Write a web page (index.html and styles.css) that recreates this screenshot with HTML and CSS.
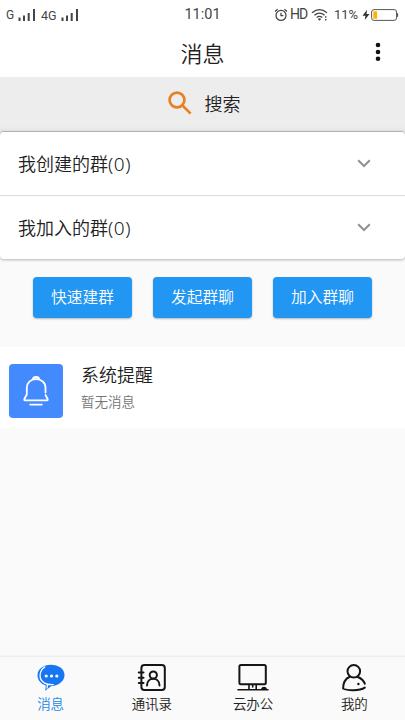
FILE: index.html
```
<!DOCTYPE html>
<html lang="zh-CN">
<head>
<meta charset="utf-8">
<meta name="viewport" content="width=device-width, initial-scale=1">
<title>消息</title>
<link rel="stylesheet" href="styles.css">
</head>
<body>
<div class="status">
  <div class="status-left">
    <span class="net net-g">G</span>
    <svg class="bars" width="19" height="14" viewBox="0 0 19 14"><path d="M2.5 9.5V13M7 7.5V13M11.7 5V13M17 1V13"/></svg>
    <span class="net net-4g">4G</span>
    <svg class="bars" width="19" height="14" viewBox="0 0 19 14"><path d="M2.5 9.5V13M7 7.5V13M11.7 5V13M17 1V13"/></svg>
  </div>
  <span class="time">11:01</span>
  <div class="status-right">
    <svg class="alarm" width="14" height="14" viewBox="0 0 14 14"><circle cx="7" cy="7.4" r="5"/><path d="M1 3.4 3.6 1.2M10.4 1.2 13 3.4M7 4.7V7.7H9.4"/></svg>
    <span class="hd">HD</span>
    <svg class="wifi" width="18" height="14" viewBox="0 0 18 14"><path d="M1 4.8Q8.5-1.6 16 4.8M3.4 7.2Q8.5 3 13.6 7.2M5.7 9.5Q8.5 7.3 11.3 9.5"/><path class="fill" d="M6.8 10.9Q8.5 9.8 10.2 10.9L8.5 12.8ZM14 8.2h1.4v1.6H14ZM14 11h1.4v1.6H14Z"/></svg>
    <span class="pct">11%</span>
    <svg class="bolt" width="8" height="12" viewBox="0 0 8 12"><path d="M5 .8.5 6.7H3.4L2.8 11 7.5 5H4.5Z"/></svg>
    <svg class="battery" width="28" height="12" viewBox="0 0 28 12"><rect class="case" x=".6" y=".6" width="25" height="10.8" rx="2.5"/><rect class="charge" x="2.3" y="2.3" width="3.8" height="7.4" rx=".5"/><path class="tip" d="M26.4 4.2V7.8"/></svg>
  </div>
</div>
<header class="header">
  <h1>消息</h1>
  <svg class="more" width="6" height="20" viewBox="0 0 6 20"><circle cx="3" cy="3" r="2.3"/><circle cx="3" cy="10" r="2.3"/><circle cx="3" cy="16.8" r="2.3"/></svg>
</header>
<div class="search">
  <svg width="24" height="24" viewBox="0 0 24 24"><circle cx="9" cy="9" r="7.4"/><path d="M14 14 22.6 22.6"/></svg>
  <span>搜索</span>
</div>
<section class="groups">
  <div class="group"><span>我创建的群<span class="count">(0)</span></span><svg width="14" height="9" viewBox="0 0 14 9"><path d="M1.2 1.2 7 7 12.8 1.2"/></svg></div>
  <div class="group"><span>我加入的群<span class="count">(0)</span></span><svg width="14" height="9" viewBox="0 0 14 9"><path d="M1.2 1.2 7 7 12.8 1.2"/></svg></div>
</section>
<div class="actions">
  <button>快速建群</button>
  <button>发起群聊</button>
  <button>加入群聊</button>
</div>
<main class="message">
  <div class="avatar">
    <svg width="28" height="32" viewBox="0 0 28 32"><path d="M11 4.2Q11 2 14 2T17 4.2M23.5 17.5V13C23.5 7.5 19.5 4.2 14 4.2S4.8 7.5 4.8 13V19.5L2.4 24Q1.8 25.4 3.2 25.4H24.8Q26.2 25.4 25.6 24L23.5 20M8.2 29.6H19.8"/></svg>
  </div>
  <div class="message-text"><h2>系统提醒</h2><p>暂无消息</p></div>
</main>
<nav class="tabs">
  <a class="tab active">
    <svg width="30" height="30" viewBox="0 0 30 30"><path class="fill" d="M14.8 1.8C22.5 1.8 28.5 6 28.5 12S23 22.5 15.5 23L9.2 27.8 9.8 22.6C4.8 21 1.5 17 1.5 12.3 1.5 6.3 7.3 1.8 14.8 1.8Z"/><path class="gap" d="M8.8 3.9C3.2 7.6 1.9 16.4 8.6 20.1 11.4 21.6 14 21.8 17.3 21.6M11 25.2 11.5 21.6"/><g class="dots"><circle cx="10.2" cy="13" r="1.6"/><circle cx="15.5" cy="13" r="1.6"/><circle cx="20.8" cy="13" r="1.6"/></g></svg>
    <span>消息</span>
  </a>
  <a class="tab">
    <svg width="30" height="30" viewBox="0 0 30 30"><rect class="line" x="4.4" y="2" width="23.4" height="25" rx="3"/><path class="line" d="M1.8 9.5H6.5M1.8 14.7H6.5M1.8 20H6.5M10 22.5C10 13.5 22.5 13.5 22.5 22.5"/><circle class="line" cx="16.3" cy="12" r="3.6"/></svg>
    <span>通讯录</span>
  </a>
  <a class="tab">
    <svg width="32" height="30" viewBox="0 0 32 30"><rect class="line" x="2.4" y="2" width="26.4" height="19.2" rx="1.5"/><path class="line thin" d="M1 26.8H31M12 21.5V26M15.7 22V24M19.2 21.5V26"/><path class="fill" d="M23.8 26.8Q24.5 23.7 27 23.7T30.2 26.8Z"/></svg>
    <span>云办公</span>
  </a>
  <a class="tab">
    <svg width="30" height="30" viewBox="0 0 30 30"><circle class="line" cx="14.8" cy="8.3" r="6.3"/><path class="line" d="M10.4 14C5.8 16 4.2 20 4.1 25.5 8 27.7 20.5 28 25.8 24.6M18.8 14C22.5 15.5 24.7 17.6 25.8 20.7"/><circle class="fill" cx="19.4" cy="21" r="1.2"/></svg>
    <span>我的</span>
  </a>
</nav>
</body>
</html>
```
FILE: styles.css
```
* { box-sizing: border-box; }
body {
  margin: 0;
  height: 100vh;
  display: flex;
  flex-direction: column;
  overflow: hidden;
  background: #fafafa;
  color: #212121;
  font-family: "Noto Sans CJK SC", sans-serif;
  font-weight: 350;
}
svg { display: block; flex: none; fill: none; }
h1, h2, p { margin: 0; font-weight: 350; }

.status {
  height: 28px;
  flex: none;
  display: grid;
  grid-template-columns: 1fr auto 1fr;
  align-items: center;
  padding: 0 6px 1px;
  background: #fff;
  color: #444;
  font-family: Roboto, sans-serif;
  font-weight: 400;
  line-height: 27px;
}
.status-left, .status-right { display: flex; align-items: center; }
.status-right { justify-content: flex-end; }
.net { font-size: 12px; padding-top: 2px; }
.net-g { width: 11px; }
.net-4g { width: 19px; margin-left: 5px; font-size: 12.5px; }
.bars { stroke: #444; stroke-width: 2; }
.time { font-size: 14.5px; }
.alarm, .wifi { stroke: #444; stroke-width: 1.25; }
.hd { margin-left: 2px; width: 19px; font-size: 14px; letter-spacing: -.9px; }
.wifi { margin-left: 2px; }
.wifi .fill { fill: #444; stroke: none; }
.pct { margin-left: 5px; width: 25px; font-size: 13px; }
.bolt { margin-left: 3px; fill: #333; }
.battery { margin-left: 1px; }
.case { stroke: #555; stroke-width: 1; }
.charge { fill: #ffb300; }
.tip { stroke: #555; stroke-width: 1.4; }

.header {
  height: 49px;
  flex: none;
  display: grid;
  grid-template-columns: 1fr auto 1fr;
  align-items: center;
  padding: 0 24px 2px;
  background: #fff;
}
.header h1 { grid-column: 2; font-size: 22px; line-height: 46px; }
.more { justify-self: end; fill: #111; }

.search {
  height: 55px;
  flex: none;
  display: flex;
  justify-content: center;
  align-items: center;
  gap: 13px;
  padding: 0 0 3px 3px;
  background: linear-gradient(#ededed 49px, #e4e4e4);
  font-size: 18px;
}
.search svg { stroke: #e88024; stroke-width: 2.7; }

.groups {
  flex: none;
  background: #fff;
  border-radius: 4px;
  box-shadow: 0 1px 3px rgba(0, 0, 0, .28), 0 -1px 1px rgba(0, 0, 0, .2);
}
.group {
  height: 63px;
  display: flex;
  align-items: center;
  justify-content: space-between;
  padding: 0 34px 1px 18px;
  font-size: 18px;
}
.group + .group { height: 64px; border-top: 1px solid #dcdcdc; }
.group svg { stroke: #929292; stroke-width: 2; }
.count { font-family: "Noto Sans", sans-serif; font-weight: 350; font-size: 19px; line-height: 20px; letter-spacing: .5px; }

.actions {
  flex: none;
  display: flex;
  justify-content: center;
  gap: 21px;
  padding: 18px 0 29px;
}
.actions button {
  width: 99px;
  height: 41px;
  padding: 0 0 2px;
  border: 0;
  border-radius: 4px;
  background: #2196f3;
  box-shadow: 0 1px 2px rgba(0, 0, 0, .28);
  color: #fff;
  font: 350 15.75px "Noto Sans CJK SC", sans-serif;
}

.message {
  height: 81px;
  flex: none;
  display: flex;
  padding: 17px 9px 0;
  gap: 18px;
  background: #fff;
}
.avatar {
  width: 54px;
  height: 54px;
  display: grid;
  place-items: center;
  border-radius: 4px;
  background: #448aff;
}
.avatar svg { stroke: #fff; stroke-width: 1.8; stroke-linecap: round; stroke-linejoin: round; }
.message-text { margin-top: -1px; }
.message h2 { font-size: 18px; line-height: 22px; }
.message p { margin-top: 6px; font-size: 13.5px; line-height: 20px; color: #757575; }

.tabs {
  height: 64px;
  flex: none;
  margin-top: auto;
  display: grid;
  grid-template-columns: repeat(4, 1fr);
  border-top: 1px solid #ededed;
  background: #fafafa;
  box-shadow: 0 -1px 1px rgba(0, 0, 0, .02);
}
.tab {
  display: flex;
  flex-direction: column;
  align-items: center;
  padding-top: 6px;
  font-size: 13.5px;
  line-height: 20px;
}
.tab .line { stroke: #151515; stroke-width: 2; stroke-linecap: round; stroke-linejoin: round; }
.tab .thin { stroke-width: 1.6; }
.tab .fill { fill: #151515; }
.tab.active { color: #2388e5; }
.tab.active .fill { fill: #1976f3; }
.gap { stroke: #fafafa; stroke-width: 1.3; stroke-linecap: round; }
.tab .dots { fill: #fff; }
```
